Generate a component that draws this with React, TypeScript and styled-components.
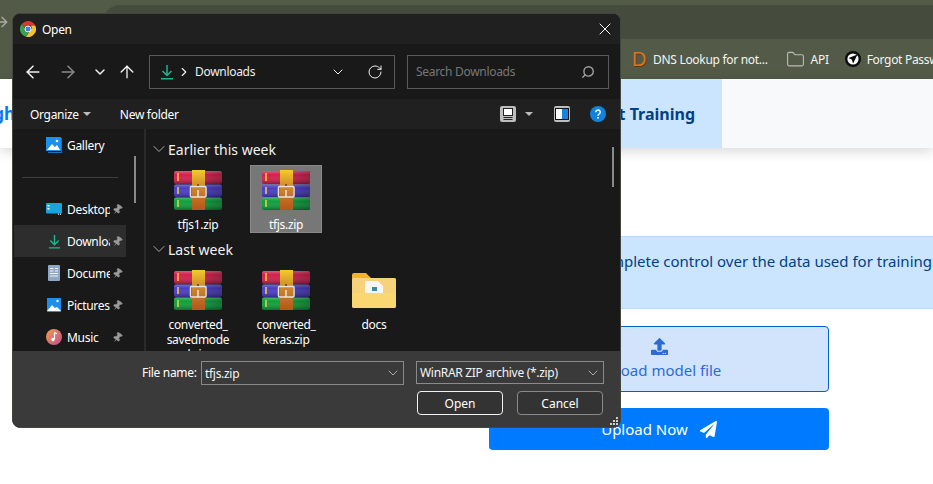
import React from "react";
import styled, { createGlobalStyle } from "styled-components";
import { ArrowLeft, ArrowRight, ArrowUp, ChevronDown, ChevronRight, Folder, Pin, RotateCw, Search, X } from "lucide-react";
import { FaPaperPlane, FaUpload } from "react-icons/fa";

const GlobalStyle = createGlobalStyle`
  html, body {
    margin: 0;
    padding: 0;
    background: #fff;
  }
  body {
    font-family: "Noto Sans", "Open Sans", sans-serif;
  }
`;

const uiFont = `"Noto Sans", "Open Sans", sans-serif`;

const Screen = styled.div`
  position: relative;
  width: 933px;
  height: 484px;
  overflow: hidden;
  background: #fff;
`;

/* browser behind the dialog */
const Toolbar = styled.div`
  height: 39px;
  box-sizing: border-box;
  padding-top: 5px;
  padding-left: 103px;
  background: #535b48;
`;

const Omnibox = styled.div`
  height: 34px;
  background: #454b3d;
  border-radius: 17px 0 0 17px;
`;

const BackGlyph = styled.span`
  position: absolute;
  left: -6px;
  top: 14px;
  color: #a9ada1;
  display: flex;
`;

const BookmarkBar = styled.div`
  height: 40px;
  background: #535b48;
  display: flex;
  align-items: center;
  padding-left: 632px;
  color: #f4f5f2;
  font-size: 12px;
  letter-spacing: -0.3px;
  white-space: nowrap;
  overflow: hidden;
`;

const Bookmark = styled.div<{ $gap: number }>`
  display: flex;
  align-items: center;
  gap: 6px;
  margin-right: ${(p) => p.$gap}px;
  flex-shrink: 0;
`;

const DLetter = styled.span`
  font-family: "Liberation Sans", sans-serif;
  font-size: 20px;
  line-height: 18px;
  width: 15px;
  color: #d9771e;
  text-shadow: 1px 1px 0 #5a3a16;
`;

const SiteNav = styled.nav`
  height: 69px;
  display: flex;
  background: #f8f9fa;
  box-shadow: 0 3px 12px rgba(0, 0, 0, 0.16);
  font-weight: 700;
  position: relative;
`;

const Brand = styled.a`
  width: 15px;
  display: flex;
  justify-content: flex-end;
  align-items: center;
  overflow: hidden;
  color: #007bff;
  font-size: 17px;
  background: #fff;
`;

const ActiveLink = styled.a`
  margin-left: 477px;
  width: 230px;
  box-sizing: border-box;
  padding-right: 27px;
  display: flex;
  justify-content: flex-end;
  align-items: center;
  background: #cce5ff;
  color: #004085;
  font-size: 16px;
`;

const Main = styled.main`
  padding-top: 88px;
  display: flex;
  flex-direction: column;
`;

const Notice = styled.div`
  height: 73px;
  margin-left: 400px;
  padding-top: 12px;
  box-sizing: border-box;
  background: #cce5ff;
  border-top: 1px solid #b8daff;
  border-bottom: 1px solid #b8daff;
  color: #004085;
  font-size: 15px;
  line-height: 24px;
  white-space: nowrap;
  text-align: right;
  padding-right: 1px;
`;

const UploadColumn = styled.div`
  width: 340px;
  margin-left: 489px;
  margin-top: 17px;
  display: flex;
  flex-direction: column;
  gap: 16px;
`;

const DropZone = styled.label`
  height: 66px;
  box-sizing: border-box;
  border: 1px solid #0062cc;
  border-radius: 4px;
  background: #d2e4fb;
  color: #2d6bd4;
  font-size: 15px;
  display: flex;
  flex-direction: column;
  align-items: center;
  justify-content: center;
  gap: 5px;
`;

const SubmitButton = styled.button`
  height: 42px;
  border: none;
  border-radius: 4px;
  background: #007bff;
  color: #fff;
  font-family: ${uiFont};
  font-size: 15px;
  display: flex;
  align-items: center;
  justify-content: center;
  gap: 12px;
`;

/* file dialog: a window floating over the page */
const Dialog = styled.div`
  position: absolute;
  left: 12px;
  top: 13px;
  width: 609px;
  height: 415px;
  box-sizing: border-box;
  border: 1px solid #43463f;
  border-radius: 8px;
  overflow: hidden;
  color: #fff;
  font-size: 12px;
  letter-spacing: -0.3px;
  display: flex;
  flex-direction: column;
  background: #191919;
`;

const TitleBar = styled.div`
  height: 30px;
  flex-shrink: 0;
  background: #202020;
  display: flex;
  align-items: center;
  padding: 0 5px 0 7px;
  gap: 6px;
`;

const TitleText = styled.span`
  flex: 1;
`;

const AddressRow = styled.div`
  height: 55px;
  flex-shrink: 0;
  background: #191919;
  display: flex;
  align-items: center;
  box-sizing: border-box;
  padding: 0 11px 0 10px;
`;

const NavIcon = styled.span<{ $width: number; $dim?: boolean }>`
  width: ${(p) => p.$width}px;
  flex-shrink: 0;
  display: flex;
  color: ${(p) => (p.$dim ? "#8a8a8a" : "#f2f2f2")};
`;

const PathBox = styled.div`
  width: 246px;
  height: 34px;
  box-sizing: border-box;
  border: 1px solid #5a5a5a;
  margin-left: 12px;
  margin-right: 12px;
  display: flex;
  align-items: center;
  padding-left: 9px;
  color: #eee;
  flex-shrink: 0;
`;

const PathLabel = styled.span`
  flex: 1;
  margin-left: 4px;
`;

const SearchBox = styled.div`
  width: 202px;
  height: 34px;
  box-sizing: border-box;
  border: 1px solid #5a5a5a;
  display: flex;
  align-items: center;
  justify-content: space-between;
  padding: 0 13px 0 8px;
  color: #777;
  flex-shrink: 0;
`;

const CommandBar = styled.div`
  height: 30px;
  flex-shrink: 0;
  background: #202020;
  display: flex;
  align-items: center;
  padding: 0 14px 0 17px;
`;

const Command = styled.span<{ $gap?: number }>`
  display: flex;
  align-items: center;
  gap: 4px;
  margin-right: ${(p) => p.$gap ?? 0}px;
`;

const Caret = styled.span`
  width: 0;
  height: 0;
  border-left: 4px solid transparent;
  border-right: 4px solid transparent;
  border-top: 4px solid #bbb;
`;

const CommandIcons = styled.div`
  margin-left: auto;
  display: flex;
  align-items: center;
`;

const ToolIcon = styled.svg<{ $gap?: number }>`
  margin-left: ${(p) => p.$gap ?? 0}px;
  display: block;
`;

const Body = styled.div`
  height: 222px;
  flex-shrink: 0;
  display: flex;
  position: relative;
  overflow: hidden;
`;

const NavPane = styled.div`
  width: 130px;
  flex-shrink: 0;
  border-right: 2px solid #2a2a2a;
  padding-left: 1px;
`;

const NavRow = styled.div<{ $active?: boolean }>`
  width: 112px;
  height: 32px;
  box-sizing: border-box;
  padding-left: 32px;
  display: flex;
  align-items: center;
  background: ${(p) => (p.$active ? "#2d2d2d" : "transparent")};
`;

const NavGlyph = styled.span`
  width: 16px;
  flex-shrink: 0;
  display: flex;
  justify-content: center;
  margin-right: 5px;
`;

const NavLabel = styled.span`
  width: 43px;
  overflow: hidden;
  white-space: nowrap;
  flex-shrink: 0;
`;

const PinMark = styled.span`
  display: flex;
  transform: rotate(35deg);
  color: #9a9a9a;
  margin-left: 2px;
`;

const NavDivider = styled.div`
  height: 32px;
  display: flex;
  align-items: center;
  padding-left: 8px;
  &::after {
    content: "";
    width: 96px;
    height: 1px;
    background: #3d3d3d;
  }
`;

const ScrollThumb = styled.div<{ $left: number; $top: number; $height: number }>`
  position: absolute;
  left: ${(p) => p.$left}px;
  top: ${(p) => p.$top}px;
  width: 2px;
  height: ${(p) => p.$height}px;
  background: #8a8a8a;
`;

const FilesPane = styled.div`
  flex: 1;
  padding-top: 10px;
  padding-left: 3px;
`;

const GroupHeader = styled.div`
  height: 20px;
  display: flex;
  align-items: center;
  font-size: 14px;
  letter-spacing: 0;
  margin-bottom: 6px;
  color: #f2f2f2;
  svg {
    margin-right: -1px;
  }
`;

const TileRow = styled.div`
  display: flex;
  gap: 16px;
  padding-left: 13px;
  margin-bottom: 6px;
`;

const Tile = styled.div<{ $selected?: boolean }>`
  width: 72px;
  min-height: 68px;
  box-sizing: border-box;
  padding-top: 5px;
  display: flex;
  flex-direction: column;
  align-items: center;
  text-align: center;
  background: ${(p) => (p.$selected ? "#777" : "transparent")};
  box-shadow: ${(p) => (p.$selected ? "inset 0 0 0 1px #8a8a8a" : "none")};
  svg {
    flex-shrink: 0;
  }
`;

const TileName = styled.span`
  width: 64px;
  margin-top: 7px;
  line-height: 15px;
  overflow-wrap: anywhere;
`;

const Footer = styled.div`
  flex: 1;
  background: #3a3a3a;
  position: relative;
  padding-top: 10px;
  box-sizing: border-box;
`;

const FieldRow = styled.div`
  display: flex;
  align-items: flex-start;
  padding-left: 129px;
`;

const FieldLabel = styled.label`
  width: 59px;
  line-height: 24px;
`;

const ComboBox = styled.div<{ $width: number; $height: number; $gap?: number }>`
  width: ${(p) => p.$width}px;
  height: ${(p) => p.$height}px;
  box-sizing: border-box;
  border: 1px solid #8a8a8a;
  margin-right: ${(p) => p.$gap ?? 0}px;
  display: flex;
  align-items: center;
  justify-content: space-between;
  padding: 0 2px 0 3px;
  color: #f5f5f5;
`;

const ButtonRow = styled.div`
  display: flex;
  justify-content: flex-end;
  gap: 14px;
  padding-right: 17px;
  margin-top: 6px;
`;

const DialogButton = styled.button<{ $primary?: boolean }>`
  width: 86px;
  height: 24px;
  box-sizing: border-box;
  border: 1px solid ${(p) => (p.$primary ? "#f2f2f2" : "#8a8a8a")};
  border-radius: 4px;
  background: #333;
  color: #fff;
  font-family: ${uiFont};
  font-size: 12px;
  padding: 0;
`;

const Grip = styled.svg`
  position: absolute;
  right: 1px;
  bottom: 0;
`;

function ChromeIcon() {
  return (
    <svg width="16" height="16" viewBox="0 0 16 16">
      <path d="M8 0a8 8 0 0 1 7.2 4.5H8a3.5 3.5 0 0 0-3.3 2.3L2 2.7A8 8 0 0 1 8 0z" fill="#d93a30" />
      <path d="M2 2.7l3 5.1a3.5 3.5 0 0 0 3.3 3.7L6 15.8A8 8 0 0 1 2 2.7z" fill="#3aa14d" />
      <path d="M15.2 4.5A8 8 0 0 1 6 15.8l3.6-5.6A3.5 3.5 0 0 0 10.6 4.5z" fill="#f2c230" />
      <circle cx="8" cy="8" r="3" fill="#3f7fe6" stroke="#fff" strokeWidth="1" />
    </svg>
  );
}

function DownloadIcon({ size }: { size: number }) {
  return (
    <svg width={size} height={size} viewBox="0 0 14 16" fill="none" stroke="#1fb58f" strokeWidth="1.5">
      <path d="M7 1v10M2.5 7L7 11.5 11.5 7M1 14.8h12" />
    </svg>
  );
}

function ArchiveIcon() {
  return (
    <svg width="48" height="40" viewBox="0 0 48 40">
      <defs>
        <linearGradient id="belt" x1="0" y1="0" x2="0" y2="1">
          <stop offset="0" stopColor="#f2cc2e" />
          <stop offset="0.4" stopColor="#d08a2c" />
          <stop offset="1" stopColor="#b5561a" />
        </linearGradient>
        <linearGradient id="shade" x1="0" y1="0" x2="1" y2="0">
          <stop offset="0" stopColor="#000" stopOpacity="0" />
          <stop offset="0.4" stopColor="#000" stopOpacity="0" />
          <stop offset="1" stopColor="#000" stopOpacity="0.25" />
        </linearGradient>
        <linearGradient id="gloss" x1="0" y1="0" x2="0" y2="1">
          <stop offset="0" stopColor="#fff" stopOpacity="0.25" />
          <stop offset="0.3" stopColor="#fff" stopOpacity="0" />
          <stop offset="1" stopColor="#000" stopOpacity="0.3" />
        </linearGradient>
      </defs>
      <rect x="0" y="1" width="48" height="13" rx="2" fill="#d2204e" />
      <rect x="0" y="14.5" width="48" height="12.5" rx="2" fill="#4a3cc4" />
      <rect x="0" y="27.5" width="48" height="12.5" rx="2" fill="#0e9f3e" />
      <rect x="0" y="1" width="48" height="13" rx="2" fill="url(#gloss)" />
      <rect x="0" y="14.5" width="48" height="12.5" rx="2" fill="url(#gloss)" />
      <rect x="0" y="27.5" width="48" height="12.5" rx="2" fill="url(#gloss)" />
      <rect x="0" y="1" width="48" height="39" fill="url(#shade)" />
      <path d="M4 3v8M4 17v7M4 30v7" stroke="#f0d23a" strokeWidth="1.5" />
      <rect x="18" y="0" width="13" height="40" fill="url(#belt)" />
      <rect x="16.5" y="16.5" width="15.5" height="10.5" rx="1" fill="none" stroke="#e4e4e4" strokeWidth="1.5" />
      <path d="M24 20v7" stroke="#e4e4e4" strokeWidth="1.5" />
      <circle cx="24" cy="15" r="1" fill="#6b3a12" />
    </svg>
  );
}

function DocsFolderIcon() {
  return (
    <svg width="44" height="36" viewBox="0 0 44 36" style={{ marginTop: 2, marginBottom: 2 }}>
      <path d="M0 3a2 2 0 0 1 2-2h12l5 5h23a2 2 0 0 1 2 2v4H0z" fill="#f0b429" />
      <rect x="0" y="6" width="44" height="30" rx="2" fill="#f7d27a" />
      <path d="M13 9h13l5 5v10H13z" fill="#f6f6f6" />
      <rect x="20" y="15" width="5" height="4" fill="#3d87a8" />
      <path d="M0 21h44v13a2 2 0 0 1-2 2H2a2 2 0 0 1-2-2z" fill="#fbd772" />
    </svg>
  );
}

function GalleryIcon() {
  return (
    <svg width="16" height="16" viewBox="0 0 16 16">
      <rect x="0" y="0" width="15" height="14" fill="#1e90e8" />
      <path d="M1 13l5-6 3 3 2-2 3 5z" fill="#fff" />
      <circle cx="11" cy="4" r="1.3" fill="#fff" />
      <path d="M15 1h1v15H2v-1h13z" fill="#1a6fb5" />
    </svg>
  );
}

function DesktopIcon() {
  return (
    <svg width="16" height="12" viewBox="0 0 16 12">
      <rect width="16" height="10.5" rx="1" fill="#16a5dc" />
      <rect x="1.5" y="2" width="2" height="1.5" fill="#fff" />
      <rect x="1.5" y="5" width="2" height="1.5" fill="#fff" />
      <rect x="12" y="10.5" width="1" height="1.5" fill="#ccc" />
      <rect x="14" y="10.5" width="1" height="1.5" fill="#ccc" />
    </svg>
  );
}

function DocumentIcon() {
  return (
    <svg width="12" height="16" viewBox="0 0 12 16">
      <rect width="12" height="16" rx="1" fill="#8fa8c4" />
      <path d="M2 3.5h3.5M2 6h3.5M7 3.5h3M7 6h3M2 8.5h8M2 11h8" stroke="#f2f5f8" strokeWidth="1" />
    </svg>
  );
}

function PicturesIcon() {
  return (
    <svg width="14" height="14" viewBox="0 0 14 14">
      <rect width="14" height="14" fill="#1e8fe8" />
      <path d="M0 13l5-6 3 3 2-1 4 4z" fill="#fff" />
      <circle cx="10.5" cy="3" r="1.2" fill="#fff" />
    </svg>
  );
}

function MusicIcon() {
  return (
    <svg width="16" height="16" viewBox="0 0 16 16">
      <defs>
        <linearGradient id="music" x1="0" y1="0" x2="1" y2="1">
          <stop offset="0" stopColor="#f0a04f" />
          <stop offset="1" stopColor="#c7488f" />
        </linearGradient>
      </defs>
      <circle cx="8" cy="8" r="8" fill="url(#music)" />
      <path d="M8.5 3.5v6.5" stroke="#fff" strokeWidth="1.2" />
      <path d="M8.5 3.5l2.5 1.2" stroke="#fff" strokeWidth="1.2" />
      <circle cx="7" cy="10.5" r="1.7" fill="#fff" />
    </svg>
  );
}

function PinIcon() {
  return (
    <PinMark>
      <Pin size={11} fill="#9a9a9a" strokeWidth={1.5} />
    </PinMark>
  );
}

const sideItems = [
  { label: "Desktop", icon: <DesktopIcon />, active: false },
  { label: "Downloads", icon: <DownloadIcon size={15} />, active: true },
  { label: "Documents", icon: <DocumentIcon />, active: false },
  { label: "Pictures", icon: <PicturesIcon />, active: false },
  { label: "Music", icon: <MusicIcon />, active: false },
];

export default function App() {
  return (
    <>
      <GlobalStyle />
      <Screen>
        <Toolbar>
          <BackGlyph>
            <ArrowRight size={16} strokeWidth={2} />
          </BackGlyph>
          <Omnibox />
        </Toolbar>
        <BookmarkBar>
          <Bookmark $gap={18}>
            <DLetter>D</DLetter>
            DNS Lookup for not...
          </Bookmark>
          <Bookmark $gap={16}>
            <Folder size={19} color="#b9bcb3" strokeWidth={1.4} />
            API
          </Bookmark>
          <Bookmark $gap={0}>
            <svg width="16" height="16" viewBox="0 0 16 16">
              <circle cx="8" cy="8" r="8" fill="#0c0c0c" />
              <circle cx="8" cy="8" r="5.6" fill="#fff" />
              <path d="M12.5 3.5L3.5 7l3.2 1.6 1.4 3.9z" fill="#0c0c0c" />
            </svg>
            Forgot Password
          </Bookmark>
        </BookmarkBar>
        <SiteNav>
          <Brand>gh</Brand>
          <ActiveLink>Start Training</ActiveLink>
        </SiteNav>
        <Main>
          <Notice>You have complete control over the data used for training</Notice>
          <UploadColumn>
            <DropZone>
              <FaUpload size={17} />
              Upload model file
            </DropZone>
            <SubmitButton>
              Upload Now
              <FaPaperPlane size={17} />
            </SubmitButton>
          </UploadColumn>
        </Main>

        <Dialog>
          <TitleBar>
            <ChromeIcon />
            <TitleText>Open</TitleText>
            <X size={20} strokeWidth={1.2} />
          </TitleBar>
          <AddressRow>
            <NavIcon $width={35}>
              <ArrowLeft size={20} strokeWidth={1.8} />
            </NavIcon>
            <NavIcon $width={31} $dim>
              <ArrowRight size={20} strokeWidth={1.8} />
            </NavIcon>
            <NavIcon $width={28}>
              <ChevronDown size={16} strokeWidth={2.2} style={{ marginLeft: 3 }} />
            </NavIcon>
            <NavIcon $width={20}>
              <ArrowUp size={20} strokeWidth={1.6} />
            </NavIcon>
            <PathBox>
              <DownloadIcon size={16} />
              <ChevronRight size={14} strokeWidth={2} style={{ marginLeft: 2 }} />
              <PathLabel>Downloads</PathLabel>
              <ChevronDown size={16} strokeWidth={1.5} style={{ marginRight: 21 }} />
              <RotateCw size={16} strokeWidth={1.5} style={{ marginRight: 11 }} />
            </PathBox>
            <SearchBox>
              Search Downloads
              <Search size={14} strokeWidth={2.4} color="#a0a0a0" style={{ transform: "scaleX(-1)" }} />
            </SearchBox>
          </AddressRow>
          <CommandBar>
            <Command $gap={29}>
              Organize
              <Caret />
            </Command>
            <Command>New folder</Command>
            <CommandIcons>
              <ToolIcon width="16" height="16" viewBox="0 0 16 16">
                <rect width="16" height="16" rx="2" fill="#bdbdbd" />
                <rect x="3.5" y="2.5" width="9" height="7" fill="#fff" stroke="#222" />
                <path d="M3.5 11.5h9M3.5 13.5h9" stroke="#222" />
              </ToolIcon>
              <Caret style={{ marginLeft: 9 }} />
              <ToolIcon $gap={21} width="16" height="16" viewBox="0 0 16 16">
                <rect width="16" height="16" rx="2" fill="#bdbdbd" />
                <rect x="1.5" y="2.5" width="13" height="11" fill="#fff" stroke="#111" />
                <rect x="8" y="3" width="6" height="10" fill="#1684d8" />
              </ToolIcon>
              <ToolIcon $gap={20} width="16" height="16" viewBox="0 0 16 16">
                <circle cx="8" cy="8" r="8" fill="#1283dc" />
                <path d="M5.8 6.2a2.2 2.2 0 1 1 3.4 1.8c-.8.5-1.2.9-1.2 1.8" fill="none" stroke="#fff" strokeWidth="1.4" />
                <rect x="7.2" y="11" width="1.6" height="1.6" fill="#fff" />
              </ToolIcon>
            </CommandIcons>
          </CommandBar>
          <Body>
            <NavPane>
              <NavRow>
                <NavGlyph>
                  <GalleryIcon />
                </NavGlyph>
                <NavLabel>Gallery</NavLabel>
              </NavRow>
              <NavDivider />
              {sideItems.map((item) => (
                <NavRow key={item.label} $active={item.active}>
                  <NavGlyph>{item.icon}</NavGlyph>
                  <NavLabel>{item.label}</NavLabel>
                  <PinIcon />
                </NavRow>
              ))}
            </NavPane>
            <ScrollThumb $left={121} $top={27} $height={47} />
            <FilesPane>
              <GroupHeader>
                <ChevronDown size={20} color="#aaa" strokeWidth={1.2} />
                Earlier this week
              </GroupHeader>
              <TileRow>
                <Tile>
                  <ArchiveIcon />
                  <TileName>tfjs1.zip</TileName>
                </Tile>
                <Tile $selected>
                  <ArchiveIcon />
                  <TileName>tfjs.zip</TileName>
                </Tile>
              </TileRow>
              <GroupHeader>
                <ChevronDown size={20} color="#aaa" strokeWidth={1.2} />
                Last week
              </GroupHeader>
              <TileRow>
                <Tile>
                  <ArchiveIcon />
                  <TileName>converted_ savedmodel.zip</TileName>
                </Tile>
                <Tile>
                  <ArchiveIcon />
                  <TileName>converted_ keras.zip</TileName>
                </Tile>
                <Tile>
                  <DocsFolderIcon />
                  <TileName>docs</TileName>
                </Tile>
              </TileRow>
            </FilesPane>
            <ScrollThumb $left={599} $top={18} $height={40} />
          </Body>
          <Footer>
            <FieldRow>
              <FieldLabel>File name:</FieldLabel>
              <ComboBox $width={203} $height={24} $gap={12}>
                tfjs.zip
                <ChevronDown size={16} strokeWidth={1.2} color="#ccc" />
              </ComboBox>
              <ComboBox $width={188} $height={23}>
                WinRAR ZIP archive (*.zip)
                <ChevronDown size={16} strokeWidth={1.2} color="#ccc" />
              </ComboBox>
            </FieldRow>
            <ButtonRow>
              <DialogButton $primary>Open</DialogButton>
              <DialogButton>Cancel</DialogButton>
            </ButtonRow>
            <Grip width="10" height="10" viewBox="0 0 10 10" fill="#cfcfcf">
              <rect x="7" y="0" width="2" height="2" />
              <rect x="4" y="3" width="2" height="2" />
              <rect x="7" y="3" width="2" height="2" />
              <rect x="1" y="6" width="2" height="2" />
              <rect x="4" y="6" width="2" height="2" />
              <rect x="7" y="6" width="2" height="2" />
            </Grip>
          </Footer>
        </Dialog>
      </Screen>
    </>
  );
}
